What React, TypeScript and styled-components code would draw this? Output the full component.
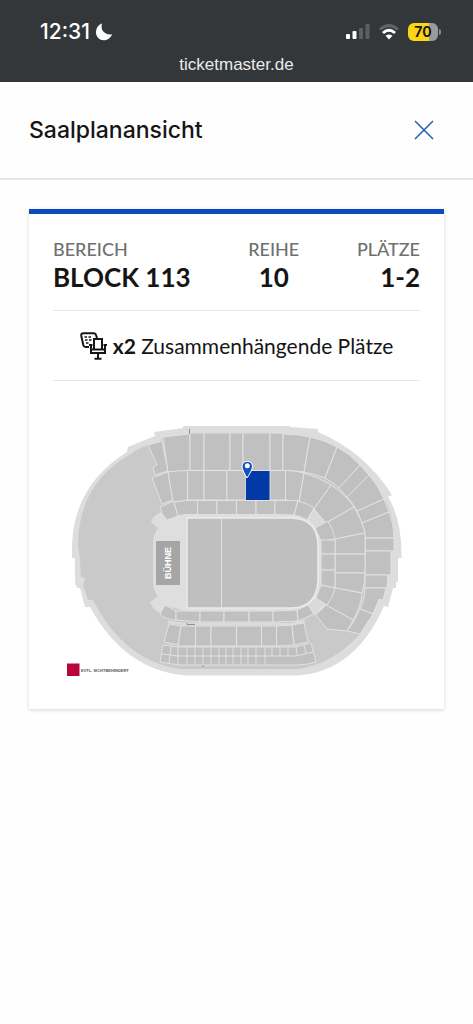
import React from 'react';
import styled, { createGlobalStyle } from 'styled-components';

const GlobalStyle = createGlobalStyle`
  * { box-sizing: border-box; }
  body { margin: 0; background: #fefefe; color: #151515; font-family: Lato, sans-serif; }
  h1, p, dl, dt, dd { margin: 0; }
`;

const Page = styled.div`
  min-height: 100vh;
  background: #fefefe;
`;

const BrowserBar = styled.header`
  background: #343739;
  color: #fff;
  font-family: Inter, sans-serif;
  padding: 20px 32px 5px 40px;
`;

const StatusRow = styled.div`
  display: flex;
  justify-content: space-between;
  align-items: center;
  height: 24px;
`;

const Clock = styled.div`
  display: flex;
  align-items: center;
  gap: 5px;
  font-size: 21px;
  font-weight: 500;
  line-height: 24px;
`;

const Indicators = styled.div`
  display: flex;
  align-items: center;
  gap: 8px;
`;

const Battery = styled.div`
  display: flex;
  align-items: center;
  gap: 1px;
`;

const BatteryBody = styled.div`
  width: 30px;
  height: 18px;
  border-radius: 6px;
  background: linear-gradient(90deg, #fcd616 70%, #9a9b9b 70%);
  color: #1d1a08;
  font-size: 14px;
  font-weight: 700;
  line-height: 18px;
  text-align: center;
`;

const BatteryTip = styled.div`
  width: 2px;
  height: 6px;
  border-radius: 0 2px 2px 0;
  background: #8c8d8e;
`;

const Address = styled.p`
  margin: 9px 0 0 -8px;
  color: #e9eaeb;
  font-family: "Liberation Sans", sans-serif;
  font-size: 17px;
  line-height: 24px;
  text-align: center;
`;

const TitleBar = styled.div`
  display: flex;
  align-items: center;
  justify-content: space-between;
  height: 98px;
  padding: 0 38px 0 29px;
  border-bottom: 2px solid #e4e5e5;
`;

const Title = styled.h1`
  font-family: Inter, sans-serif;
  font-size: 23px;
  font-weight: 500;
  line-height: 32px;
`;

const CloseButton = styled.button`
  display: flex;
  padding: 0;
  border: 0;
  background: none;
  color: #1d5fb8;
`;

const Card = styled.main`
  margin: 29px 29px 0;
  padding: 23px 24px 29px;
  border-top: 5px solid #0b4abf;
  background: #fff;
  box-shadow: 0 1px 4px rgba(0, 0, 0, 0.16);
`;

const Facts = styled.dl`
  display: flex;
  justify-content: space-between;
  padding-bottom: 17px;
  border-bottom: 1px solid #e6e6e6;
`;

const Fact = styled.div<{ $align: 'left' | 'center' | 'right' }>`
  text-align: ${(p) => p.$align};
`;

const FactLabel = styled.dt`
  color: #707070;
  font-size: 18px;
  font-weight: 500;
  line-height: 24px;
`;

const FactValue = styled.dd`
  font-size: 26px;
  font-weight: 700;
  line-height: 32px;
`;

const SeatNote = styled.p`
  display: flex;
  align-items: center;
  justify-content: center;
  gap: 6px;
  height: 70px;
  border-bottom: 1px solid #e6e6e6;
  font-size: 21px;
  line-height: 24px;
`;

const Plan = styled.svg`
  display: block;
  width: 100%;
  margin-top: 39px;
`;

function Moon() {
  return (
    <svg width="18" height="18" viewBox="0 0 18 18" aria-hidden="true">
      <path d="M7 0.500C5 7.500 10 12.400 17.300 11.200C15 15.700 11.800 17.300 8.800 17.300C4.500 17.300 1 13.800 1 9.300C1 5.200 3.500 1.800 7 0.500Z" fill="#fff" />
    </svg>
  );
}

function Signal() {
  return (
    <svg width="24" height="18" viewBox="0 0 24 18" aria-hidden="true">
      <rect x="0" y="11" width="4" height="5" rx="1" fill="#fff" />
      <rect x="6.500" y="8" width="4" height="8" rx="1" fill="#fff" />
      <rect x="13" y="5" width="4" height="11" rx="1" fill="#5c5f61" />
      <rect x="19.500" y="1" width="4" height="15" rx="1" fill="#5c5f61" />
    </svg>
  );
}

function Wifi() {
  return (
    <svg width="22" height="18" viewBox="0 0 22 18" aria-hidden="true" fill="none" strokeWidth="3">
      <path d="M2 6.500Q11 -1.500 20 6.500" stroke="#616466" />
      <path d="M5 10Q11 4.500 17 10" stroke="#fff" />
      <path d="M7.500 12.800Q11 10 14.500 12.800L11 16.500Z" fill="#fff" />
    </svg>
  );
}

function SeatIcon() {
  return (
    <svg width="27" height="28" viewBox="0 0 27 28" aria-hidden="true" fill="none" stroke="#161616" strokeWidth="2">
      <path d="M9 15H5.500Q3.800 15 3.300 13L1.300 4Q0.800 1.300 3.500 1.300H13.500Q15.600 1.300 16.200 3.500L17 6" />
      <path d="M4.500 5H7M8.500 5H11M5 8H7.500M9 8H11.500M6 11H8.500" strokeWidth="1.700" />
      <path d="M14 17.500V7H22V17.500M11 12V21H25V12M11 17.500H25M9 13H12.500M23.500 13H27M18 21V26.500M14.500 26.800H21.500" />
    </svg>
  );
}

const bowl =
  'M183 426H290V427L318 429V432Q365 452 392 495L388 497Q402 519 401.500 558H398V582H396V588H393L388 607L384 606Q355 672 297 675.500H187Q125 671 90 607H85L80 588H77L75 582V558H72V545Q74 485 127 452L128 447L155 436L154 432L183 428Z';
const stands =
  'M190 432.500H269L283 434Q311 434 337 447Q362 461 382 496L385 500Q394 516 394 538V551H391V575H388L387 585L383 600L379 599Q373 615 360 634Q332 665 297 669H180Q124 661 93 600H88L83 585L85 578L81 577L80 560L78 545Q79 481 133 453L136 450L148 445L160 442L163 437L189 434Z';

const upperBlocks = [
  'M148 445L162 441L168 471L155 475L153 467L157 465Z',
  'M163 437L189 434L190 433V471L168 472Z',
  'M190 433H204V470.500H190Z',
  'M204 433H230V470.500H204Z',
  'M230 433H243V470.500H230Z',
  'M243 433H270V470.500H243Z',
  'M270 433H283V470.500H270Z',
  'M283 434Q298 434 310 437L304 472Q294 470.500 283 470.500Z',
  'M310 437Q325 440 337 447L325 478Q315 474 304 472Z',
  'M337 447Q350 454 360 465L339 488Q333 482 325 478Z',
  'M360 465L369 475L347 497L339 488Z',
  'M369 475Q378 485 384 499L357 511Q353 503 347 497Z',
  'M384 499L389 512L362 523L357 511Z',
  'M389 512Q394 524 394 538H365Q365 530 362 523Z',
  'M365 538H394V551H365Z',
  'M365 551H391V575H365Z',
  'M365 575H388L387 588H365Z',
  'M365 588H386L383 600L379 599L373 614L360 609Q365 600 365 588Z',
  'M360 609L373 614L360 634L347 631L354 621Z',
];
const middleBlocks = [
  'M152 478L168 472L173 500L162 504Z',
  'M168 472Q178 470.500 187.500 470.500V500L173 502Z',
  'M187.500 470.500H204V500H187.500Z',
  'M204 470.500H227V500H204Z',
  'M227 470.500H246V500H227Z',
  'M270 470.500H285.500V500H270Z',
  'M285.500 470.500Q295 470.500 304 473L299 502L285.500 500Z',
  'M304 473Q318 477 331 485L314 509Q308 504 299 502Z',
  'M331 485Q346 495 354 507L326 523L314 509Z',
  'M354 507Q362 520 365 533L335 539Q333 531 326 523Z',
  'M365 533V554H335V539Z',
  'M335 554H365V573H335Z',
  'M335 573H365Q365 584 362 593L335 588Z',
  'M335 588L362 593Q361 607 353 620L326 605Q333 597 335 588Z',
  'M326 605L353 620L347 631L327 629L316 615Z',
];
const innerBlocks = [
  'M160 507L174 501L178 516L167 520Q161 514 160 507Z',
  'M174 502L186 500.500H197.500V514.500H185L178 516Z',
  'M197.500 500.500H217V514.500H197.500Z',
  'M217 500.500H236.500V514.500H217Z',
  'M236.500 500.500H256V514.500H236.500Z',
  'M256 500.500H275V514.500H256Z',
  'M275 500.500H298L294 515L275 514.500Z',
  'M298 501Q307 503 314 508L307 520Q301 516 294 515Z',
  'M315 528L328 521Q334 530 335 539L321 541Z',
  'M321 540H335V554H321Z',
  'M321 554H335V570H321Z',
  'M321 570H335V588L321 585Z',
  'M321 585L335 588Q333 598 327 605L316 598Z',
  'M160 614L165 605L176 611V620Q165 620 160 614Z',
  'M176 611H200V622L176 620Z',
  'M200 611H224V622H200Z',
  'M224 611H249V622H224Z',
  'M249 611H273V622H249Z',
  'M273 611L297 610L298 621L273 622Z',
  'M297 610L308 605L314 614L298 621Z',
];
const lowerBlocks = [
  'M169 624L181 626L178 645L164 642Z',
  'M181 626H195.500V646H178Z',
  'M195.500 626H211V646H195.500Z',
  'M211 626H236.500V646H211Z',
  'M236.500 626H261.500V646H236.500Z',
  'M261.500 626H276.500V646H261.500Z',
  'M276.500 626L292 625L294 645L276.500 646Z',
  'M292 625L304 623L308 642L294 645Z',
  'M163 645L178 647H295L311 643L316 662Q305 665 297 665H179L160 662Z',
];

function StadiumPlan() {
  return (
    <Plan viewBox="53 420 367 260" role="img" aria-label="Saalplan">
      <path d={bowl} fill="#dddddd" />
      <path d={stands} fill="#c9c9c9" />
      <path
        d="M160 507L167 519Q175 515 185 515H294Q321 518 321 546V580Q318 609 296 611H185L166 606L160 613Q153 610 150 602L158 596Q153 592 153 580V545Q153 534 158 528L151 522Q153 516 161 512Z"
        fill="#dedede"
      />
      <path d="M168 622L185 624H292L305 621" stroke="#dcdcdc" strokeWidth="2.500" fill="none" />
      <path d="M307 519L314 509L328 521L316 529ZM316 597L326 605L314 614L307 606Z" fill="#dadada" stroke="#e8e8e8" />
      <g fill="#c0c0c0" stroke="#e4e4e4" strokeWidth="0.900">
        {[...upperBlocks, ...middleBlocks, ...innerBlocks, ...lowerBlocks].map((d) => (
          <path key={d} d={d} />
        ))}
      </g>
      <path
        d="M162 654L178 656H296L313 652M171 647L169 663M178 647V665M187 647V665M195 647V665M203 647V665M211 647V665M219 647V665M226 647V665M233 647V665M241 647V665M248 647V665M256 647V665M265 647V665M272 647V656M280 647V656M288 647V656M296 646L297 655M304 645L306 653"
        stroke="#e4e4e4"
        strokeWidth="0.900"
        fill="none"
      />
      <path d="M187 518H292Q318 519 318 546V580Q317 607 292 608H187Z" fill="#bfbfbf" stroke="#ececec" strokeWidth="1.500" />
      <path d="M221.500 518V608" stroke="#e2e2e2" />
      <rect x="156" y="541" width="24" height="44" fill="#a5a5a5" />
      <text transform="translate(171 563) rotate(-90)" textAnchor="middle" fill="#fff" fontFamily="Liberation Sans, sans-serif" fontWeight="700" fontSize="9">
        BÜHNE
      </text>
      <path d="M189.500 429V434M187 623V624.500H195M202 666H204" stroke="#b46978" strokeWidth="0.800" fill="none" />
      <rect x="246" y="471" width="23.500" height="29" fill="#0339a6" />
      <path d="M247 478Q242 470 242 466A5.300 5.300 0 0 1 252.500 466Q252.500 470 247 478Z" fill="#1152bd" stroke="#fff" strokeWidth="1" />
      <circle cx="247.300" cy="465.800" r="2.500" fill="#fff" />
      <rect x="67" y="663.500" width="12.500" height="12.500" fill="#b9063a" />
      <text x="81" y="671.500" fill="#555" fontFamily="Liberation Sans, sans-serif" fontWeight="700" fontSize="4">
        EVTL. SICHTBEHINDERT
      </text>
    </Plan>
  );
}

export default function App() {
  return (
    <Page>
      <GlobalStyle />
      <BrowserBar>
        <StatusRow>
          <Clock>
            12:31
            <Moon />
          </Clock>
          <Indicators>
            <Signal />
            <Wifi />
            <Battery>
              <BatteryBody>70</BatteryBody>
              <BatteryTip />
            </Battery>
          </Indicators>
        </StatusRow>
        <Address>ticketmaster.de</Address>
      </BrowserBar>
      <TitleBar>
        <Title>Saalplanansicht</Title>
        <CloseButton type="button" aria-label="Schließen">
          <svg width="22" height="22" viewBox="0 0 22 22" fill="none" stroke="currentColor" strokeWidth="1.500">
            <path d="M2 2L20 20M20 2L2 20" />
          </svg>
        </CloseButton>
      </TitleBar>
      <Card>
        <Facts>
          <Fact $align="left">
            <FactLabel>BEREICH</FactLabel>
            <FactValue>BLOCK 113</FactValue>
          </Fact>
          <Fact $align="center">
            <FactLabel>REIHE</FactLabel>
            <FactValue>10</FactValue>
          </Fact>
          <Fact $align="right">
            <FactLabel>PLÄTZE</FactLabel>
            <FactValue>1-2</FactValue>
          </Fact>
        </Facts>
        <SeatNote>
          <SeatIcon />
          <span>
            <strong>x2</strong> Zusammenhängende Plätze
          </span>
        </SeatNote>
        <StadiumPlan />
      </Card>
    </Page>
  );
}
